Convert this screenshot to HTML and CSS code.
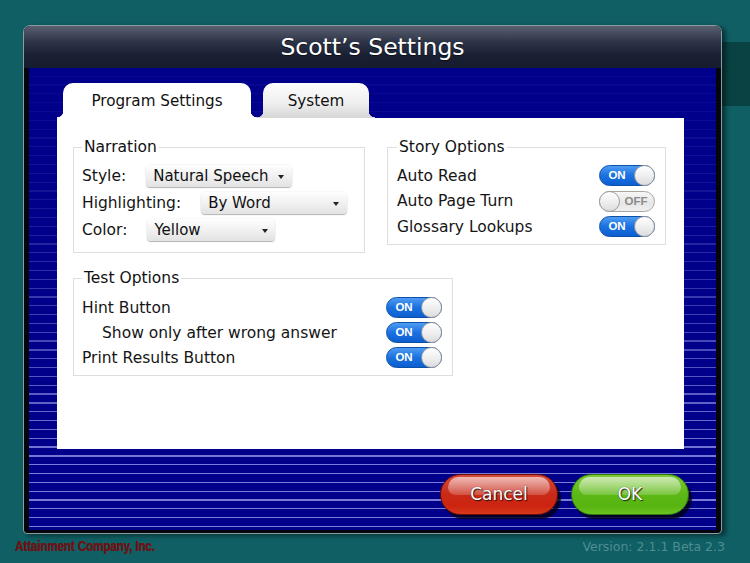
FILE: index.html
```html
<!DOCTYPE html>
<html>
<head>
<meta charset="utf-8">
<link rel="stylesheet" href="styles.css">
</head>
<body>
<div class="dialog">
  <div class="titlebar">Scott’s Settings</div>
  <div class="stage">
    <div class="tabs">
      <div class="tab tab-active"><span class="tab-body">Program Settings</span></div>
      <div class="tab tab-inactive"><span class="tab-body">System</span></div>
    </div>
    <div class="panel">
      <fieldset class="group narration">
        <legend>Narration</legend>
        <div class="row"><span class="label">Style:</span><span class="popup popup-style">Natural Speech<i class="caret"></i></span></div>
        <div class="row"><span class="label">Highlighting:</span><span class="popup popup-wide">By Word<i class="caret"></i></span></div>
        <div class="row"><span class="label">Color:</span><span class="popup popup-color">Yellow<i class="caret"></i></span></div>
      </fieldset>
      <fieldset class="group story">
        <legend>Story Options</legend>
        <div class="row row-switch"><span class="label">Auto Read</span><span class="switch on"><span class="switch-text">ON</span><span class="knob"></span></span></div>
        <div class="row row-switch"><span class="label">Auto Page Turn</span><span class="switch off"><span class="knob"></span><span class="switch-text">OFF</span></span></div>
        <div class="row row-switch"><span class="label">Glossary Lookups</span><span class="switch on"><span class="switch-text">ON</span><span class="knob"></span></span></div>
      </fieldset>
      <fieldset class="group test">
        <legend>Test Options</legend>
        <div class="row row-switch"><span class="label">Hint Button</span><span class="switch on"><span class="switch-text">ON</span><span class="knob"></span></span></div>
        <div class="row row-switch"><span class="label indent">Show only after wrong answer</span><span class="switch on"><span class="switch-text">ON</span><span class="knob"></span></span></div>
        <div class="row row-switch"><span class="label">Print Results Button</span><span class="switch on"><span class="switch-text">ON</span><span class="knob"></span></span></div>
      </fieldset>
    </div>
    <div class="actions">
      <button class="pill cancel">Cancel</button>
      <button class="pill ok">OK</button>
    </div>
  </div>
</div>
<div class="footer">
  <span class="company">Attainment Company, Inc.</span>
  <span class="version">Version: 2.1.1 Beta 2.3</span>
</div>
</body>
</html>
```
FILE: styles.css
```css
html, body {
  margin: 0;
  padding: 0;
}
body {
  width: 750px;
  height: 563px;
  overflow: hidden;
  background:
    linear-gradient(#0a4243, #0a4243) no-repeat right 0 top 42px / 28px 64px,
    #0f5f64;
  font-family: "DejaVu Sans", "Liberation Sans", sans-serif;
}

.dialog {
  margin: 25px 0 0 23px;
  width: 699px;
  box-sizing: border-box;
  border: 1px solid #8d9aa2;
  border-radius: 7px 7px 4px 4px;
  background: #04060c;
  padding: 0 5px 3px;
  box-shadow: 4px 2px 4px rgba(0, 0, 0, 0.45);
}

.titlebar {
  margin: 0 -5px;
  height: 42px;
  line-height: 42px;
  text-align: center;
  color: #fff;
  font-size: 23.5px;
  border-radius: 6px 6px 0 0;
  background: linear-gradient(#5a6070 0, #2d3447 38%, #1a2033 70%, #161c2e 100%);
  text-shadow: 0 1px 1px rgba(0, 0, 0, 0.6);
}

.stage {
  height: 462px;
  box-sizing: border-box;
  padding: 15px 27px 0 28px;
  background:
    linear-gradient(rgba(0, 0, 138, 0.95), rgba(0, 0, 138, 0.82) 30%, rgba(0, 0, 138, 0.4) 60%, rgba(0, 0, 138, 0) 86%),
    repeating-linear-gradient(#00008a 0, #00008a 7.6px, #7a7ad8 7.6px, #7a7ad8 8.83px);
}

.tabs {
  display: flex;
  height: 35px;
}
.tab {
  display: flex;
  padding: 0 6px;
}
.tab-body {
  flex: 1;
  display: flex;
  align-items: center;
  justify-content: center;
  border-radius: 10px 10px 0 0;
  font-size: 15.2px;
  color: #111;
  padding-top: 1px;
}
.tab-active {
  width: 200px;
  box-sizing: border-box;
  background:
    radial-gradient(circle at 0 0, transparent 6px, #fff 6.6px) left bottom / 6px 7px no-repeat,
    radial-gradient(circle at 100% 0, transparent 6px, #fff 6.6px) right bottom / 6px 7px no-repeat;
}
.tab-active .tab-body {
  background: #fff;
}
.tab-inactive {
  width: 118px;
  box-sizing: border-box;
  background:
    radial-gradient(circle at 0 0, transparent 6px, #d6d6d6 6.6px) left bottom / 6px 7px no-repeat,
    radial-gradient(circle at 100% 0, transparent 6px, #d6d6d6 6.6px) right bottom / 6px 7px no-repeat;
}
.tab-inactive .tab-body {
  background: linear-gradient(#fdfdfd, #f0f0f0 55%, #d6d6d6);
}

.panel {
  width: 627px;
  height: 331px;
  box-sizing: border-box;
  background: #fff;
  padding: 20px 0 0 16px;
  display: grid;
  grid-template-columns: 292px 22px 279px;
  align-items: start;
  align-content: start;
  row-gap: 16px;
}

.group {
  margin: 0;
  min-width: 0;
  box-sizing: border-box;
  border: 1px solid #dedede;
  display: flex;
  flex-direction: column;
}
.group legend {
  padding: 0 2px;
  line-height: 18px;
  font-size: 15.5px;
  color: #111;
}
.narration {
  grid-column: 1;
  grid-row: 1;
  padding: 9px 8px 11px;
  gap: 5px;
}
.story {
  grid-column: 3;
  grid-row: 1;
  padding: 9px 10px 7px 9px;
  gap: 4.5px;
}
.test {
  grid-column: 1 / 4;
  grid-row: 2;
  justify-self: start;
  width: 380px;
  padding: 10px 10px 7px 8px;
  gap: 4px;
}

.row {
  display: flex;
  align-items: center;
  gap: 20px;
  height: 22px;
}
.row-switch {
  justify-content: space-between;
  height: 21px;
}
.label {
  font-size: 15.5px;
  color: #151515;
}
.indent {
  padding-left: 20px;
}

.popup {
  display: inline-flex;
  align-items: center;
  justify-content: space-between;
  height: 22px;
  box-sizing: border-box;
  padding: 0 8px 0 7px;
  border-radius: 4px;
  background: linear-gradient(#fefefe, #f1f1f1 50%, #e2e2e2);
  box-shadow: 0 1px 1px rgba(0, 0, 0, 0.28), 0 0 0 0.5px rgba(0, 0, 0, 0.06);
  font-size: 15px;
  color: #111;
}
.popup-style { width: 146px; }
.popup-wide { width: 146px; padding-left: 7px; }
.popup-color { width: 128px; padding-left: 7px; padding-right: 7px; }
.caret {
  width: 0;
  height: 0;
  border-left: 3.5px solid transparent;
  border-right: 3.5px solid transparent;
  border-top: 4px solid #222;
  margin-top: 1px;
}

.switch {
  display: inline-flex;
  align-items: center;
  width: 56px;
  height: 21px;
  box-sizing: border-box;
  border-radius: 11px;
}
.switch.on {
  background: linear-gradient(#4f9cf3, #1b71e0 50%, #0d5fd0);
  border: 1px solid #0c4fa6;
}
.switch.off {
  background: linear-gradient(#f6f6f6, #e6e6e6 60%, #f0f0f0);
  border: 1px solid #a6a6a6;
}
.switch-text {
  flex: 1;
  text-align: center;
  font-family: "Liberation Sans", "DejaVu Sans", sans-serif;
  font-weight: bold;
  font-size: 11.5px;
  line-height: 19px;
  color: #fff;
}
.switch.off .switch-text {
  color: #8a8a8a;
  padding-right: 2px;
}
.knob {
  width: 21px;
  height: 21px;
  flex: none;
  box-sizing: border-box;
  border-radius: 50%;
  background: linear-gradient(#ffffff, #ececec 60%, #dcdcdc);
  border: 1px solid #9c9c9c;
}
.switch.on .knob { margin-right: -1px; }
.switch.off .knob { margin-left: -1px; }

.actions {
  margin-top: 25px;
  display: flex;
  justify-content: flex-end;
  gap: 13px;
}
.pill {
  position: relative;
  z-index: 0;
  width: 118px;
  height: 41px;
  box-sizing: border-box;
  border-radius: 21px;
  font-family: "DejaVu Sans", sans-serif;
  font-size: 17px;
  color: #fff;
  padding: 0 0 2px;
  text-shadow: 0 0 1px rgba(0, 0, 0, 0.6), 1px 1px 1px rgba(0, 0, 0, 0.75);
  box-shadow: 3px 4px 1px rgba(0, 0, 20, 0.8);
}
.pill::before {
  content: "";
  position: absolute;
  z-index: -1;
  left: 7px;
  right: 7px;
  top: 2px;
  height: 47%;
  border-radius: 17px 17px 12px 12px;
  background: linear-gradient(rgba(255, 255, 255, 0.62), rgba(255, 255, 255, 0.18));
}
.cancel {
  border: 1px solid #6e0c02;
  background: linear-gradient(#d24a3a, #c92a18 50%, #cc2410 80%, #d83a1c);
}
.ok {
  border: 1px solid #2d7a04;
  background: linear-gradient(#7cc83a, #5cb814 50%, #58b410 80%, #6cc420);
}

.footer {
  display: flex;
  justify-content: space-between;
  align-items: baseline;
  padding: 3px 25px 0 15px;
}
.company {
  display: inline-block;
  font-family: "Liberation Sans", sans-serif;
  font-weight: bold;
  font-size: 15px;
  letter-spacing: -0.2px;
  color: #6b1416;
  transform: scaleX(0.78);
  transform-origin: left center;
  text-shadow: 0.4px 0 0 #6b1416;
}
.version {
  font-size: 12.5px;
  color: #4f8d90;
}
```
